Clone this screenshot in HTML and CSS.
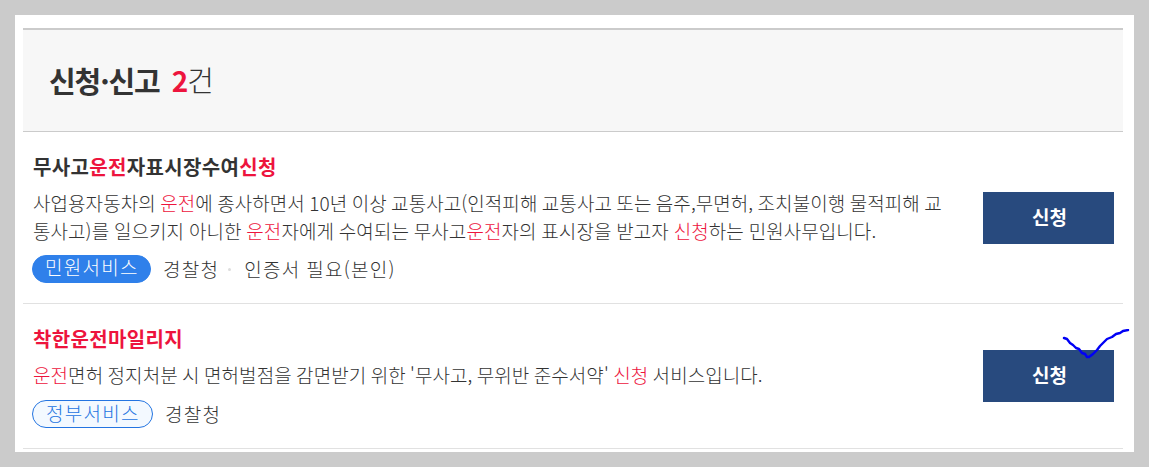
FILE: index.html
```
<!DOCTYPE html>
<html lang="ko">

<head>
    <meta charset="UTF-8" />
    <meta name="viewport" content="width=device-width, initial-scale=1.0" />
    <title>신청·신고</title>
    <link rel="stylesheet" href="styles.css">
</head>

<body>
    <div class="container">
        <div class="result-title">
            <h2>신청·신고</h2>
            <span class="count"><b>2</b>건</span>
        </div>

        <ul class="result-list">
            <li class="item">
                <div class="info">
                    <h3 class="title">무사고<em>운전</em>자표시장수여<em>신청</em></h3>
                    <p class="desc"><span class="line">사업용자동차의 <em>운전</em>에 종사하면서 10년 이상 교통사고(인적피해 교통사고 또는 음주,무면허, 조치불이행 물적피해 교</span><span class="line loose">통사고)를 일으키지 아니한 <em>운전</em>자에게 수여되는 무사고<em>운전</em>자의 표시장을 받고자 <em>신청</em>하는 민원사무입니다.</span></p>
                    <div class="meta">
                        <span class="badge minwon">민원서비스</span>
                        <span class="org">경찰청</span>
                        <span class="dot"></span>
                        <span class="cert">인증서 필요(본인)</span>
                    </div>
                </div>
                <button class="apply-btn">신청</button>
            </li>
            <li class="item second">
                <div class="info">
                    <h3 class="title">착한운전마일리지</h3>
                    <p class="desc"><span class="line"><em>운전</em>면허 정지처분 시 면허벌점을 감면받기 위한 '무사고, 무위반 준수서약' <em>신청</em> 서비스입니다.</span></p>
                    <div class="meta">
                        <span class="badge gov">정부서비스</span>
                        <span class="org">경찰청</span>
                    </div>
                </div>
                <div class="btn-wrap">
                    <button class="apply-btn">신청</button>
                    <!-- hand drawn check mark -->
                    <svg class="check" width="70" height="34" viewBox="0 0 70 34">
                        <path d="M2 9 L5 10 L8 14 L11 16 L14 19 L17 20 L20 24 L23 25 L25 28 L27 28 L31 25 L35 21 L38 17 L41 14 L45 10 L50 8 L54 5 L58 4 L61 2 L66 1" />
                    </svg>
                </div>
            </li>
        </ul>
    </div>
</body>

</html>
```
FILE: styles.css
```
* {
    box-sizing: border-box;
}

body {
    margin: 0;
    background-color: #fff;
    color: #333;
    font-family: "Noto Sans CJK KR", "Noto Sans", sans-serif;
}

.container {
    height: 467px;
    padding: 13px 11px 0 8px;
    border: 15px solid #cbcbcb;
    overflow: hidden;
}

.result-title {
    display: flex;
    align-items: center;
    gap: 12px;
    height: 104px;
    padding: 0 26px 2px;
    background-color: #f7f7f7;
    border-top: 2px solid #cbcbcb;
    border-bottom: 1px solid #cbcbcb;
    font-size: 29px;
    line-height: 40px;
}

.result-title h2 {
    margin: 0;
    font-size: 29px;
    font-weight: 700;
    letter-spacing: -1.1px;
}

.count {
    font-weight: 300;
}

.count b {
    margin-right: -1px;
    color: #ed143d;
    font-size: 28px;
    font-weight: 700;
}

em {
    color: #ed143d;
    font-style: normal;
}

.result-list {
    margin: 0;
    padding: 0;
    list-style: none;
}

.item {
    display: flex;
    justify-content: space-between;
    align-items: center;
    height: 172px;
    padding: 0 9px;
    border-bottom: 1px solid #e1e1e1;
}

.item.second {
    height: 145px;
}

.info {
    align-self: flex-start;
    padding-top: 21px;
}

.title {
    margin: 0;
    padding-left: 1px;
    font-size: 20px;
    font-weight: 700;
    line-height: 28px;
    letter-spacing: 0.35px;
}

.second .title {
    color: #ed143d;
}

.desc {
    margin: 8px 0 10px;
    padding-left: 1px;
    font-size: 19px;
    font-weight: 300;
    line-height: 28px;
    letter-spacing: 0.06px;
    word-spacing: -1px;
}

.second .desc {
    margin-bottom: 11px;
}

.line {
    display: block;
    white-space: nowrap;
}

.loose {
    word-spacing: -0.6px;
}

.meta {
    display: flex;
    align-items: center;
    height: 28px;
    font-size: 19px;
    font-weight: 300;
    line-height: 26px;
    letter-spacing: 1.3px;
    word-spacing: -1px;
}

.org,
.cert {
    padding-bottom: 1px;
}

.badge {
    height: 28px;
    margin-right: 12px;
    padding: 0 11px 0 12px;
    border: 1px solid #2f80ea;
    border-radius: 14px;
    line-height: 21px;
}

.minwon {
    background-color: #2f80ea;
    color: #fff;
}

.gov {
    padding: 0 12px 0 13px;
    background-color: #f3f9ff;
    border-color: #2374e1;
    color: #2374e1;
    line-height: 23px;
}

.dot {
    width: 3px;
    height: 3px;
    margin: 0 13px 0 9px;
    border-radius: 50%;
    background-color: #ddd;
}

.apply-btn {
    display: block;
    width: 131px;
    height: 52px;
    padding: 0 0 2px 2px;
    background-color: #284a7e;
    border: none;
    color: #fff;
    font-family: inherit;
    font-size: 19px;
    font-weight: 700;
}

.btn-wrap {
    position: relative;
}

.second .apply-btn {
    padding-bottom: 3px;
}

.check {
    position: absolute;
    top: -21px;
    left: 79px;
}

.check path {
    fill: none;
    stroke: #0000f5;
    stroke-width: 2.4;
    stroke-linejoin: round;
    stroke-linecap: round;
}
```
